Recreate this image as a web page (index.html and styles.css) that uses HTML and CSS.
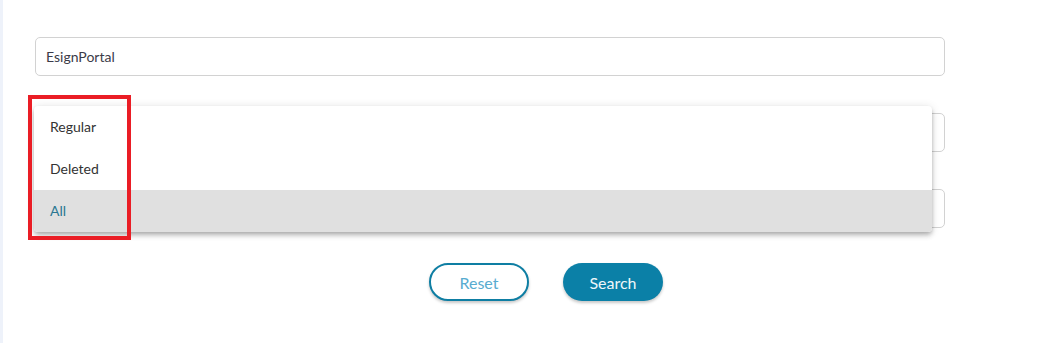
FILE: index.html
```html
<!DOCTYPE html>
<html>
<head>
	<title>Search</title>
	<link rel="stylesheet" href="styles.css">
</head>
<body>
<div class="side"></div>
<div class="main">
  <div class="fields">
    <div class="field"><input class="inp" type="text" value="EsignPortal"></div>
    <div class="field">
      <input class="inp" type="text" value="">
      <div class="hl"></div>
      <ul class="menu">
        <li>Regular</li>
        <li>Deleted</li>
        <li class="on">All</li>
      </ul>
    </div>
    <div class="field"><input class="inp" type="text" value=""></div>
  </div>
  <div class="btns">
    <button class="btn reset">Reset</button>
    <button class="btn search">Search</button>
  </div>
</div>
</body>
</html>
```
FILE: styles.css
```css
body,div,ul,li{margin:0;padding:0;}
body{
  display: flex;
  flex-direction: row;
  height: 343px;
  background: #fff;
  font-family: Lato, "Open Sans", sans-serif;
}
.side{
  width: 3px;
  background: #eef2fa;
}
.main{
  flex: 1;
  padding: 37px 102px 0 32px;
}
.fields{
  display: flex;
  flex-direction: column;
  gap: 37px;
}
.field{
  position: relative;
}
.inp{
  box-sizing: border-box;
  display: block;
  width: 910px;
  height: 39px;
  margin: 0;
  padding: 0 10px;
  border: solid 1px #d2d2d2;
  border-radius: 5px;
  font-family: inherit;
  font-size: 14px;
  color: #3b3b48;
  outline: none;
}
.menu{
  position: absolute;
  left: -1px;
  top: -7px;
  width: 898px;
  list-style: none;
  background: #fff;
  border-radius: 4px;
  overflow: hidden;
  box-shadow: 0 2px 4px -1px rgba(0,0,0,0.2), 0 4px 5px 0 rgba(0,0,0,0.14), 0 1px 10px 0 rgba(0,0,0,0.12);
  z-index: 2;
}
.menu li{
  height: 42px;
  line-height: 42px;
  padding-left: 16px;
  font-size: 14px;
  color: #333;
}
.menu li.on{
  background: #e0e0e0;
  color: #2a7792;
}
.hl{
  position: absolute;
  left: -7px;
  top: -18px;
  width: 103px;
  height: 145px;
  box-sizing: border-box;
  border: solid 4px #ea1d25;
  z-index: 3;
}
.btns{
  display: flex;
  gap: 34px;
  padding: 35px 0 0 394px;
}
.btn{
  box-sizing: border-box;
  width: 100px;
  height: 38px;
  border-radius: 19px;
  font-family: inherit;
  font-size: 16px;
  box-shadow: 0 2px 3px rgba(0,0,0,0.22);
  cursor: pointer;
}
.reset{
  background: #fff;
  border: solid 2px #0e7ea3;
  color: #58acd0;
}
.search{
  background: #0b80a7;
  border: none;
  color: #eef7fa;
}
```
